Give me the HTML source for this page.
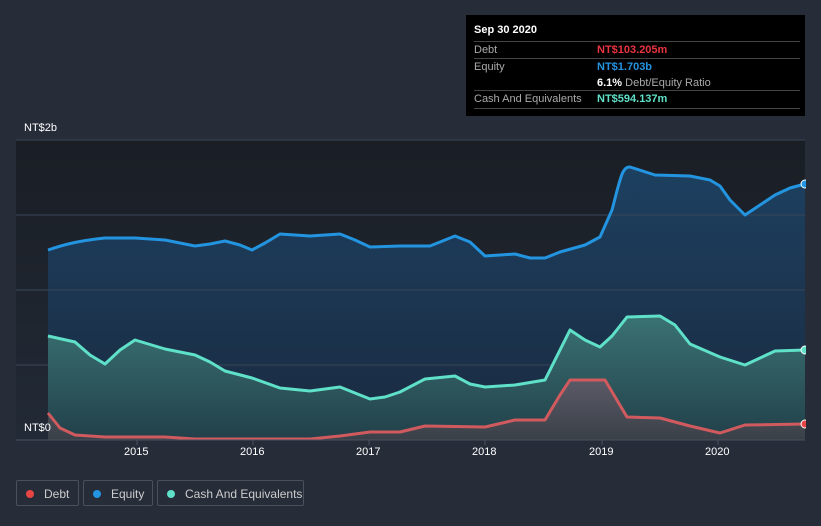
<!DOCTYPE html>
<html><head><meta charset="utf-8"><style>
body{margin:0;width:821px;height:526px;background:#262c38;font-family:"Liberation Sans",sans-serif;overflow:hidden;position:relative}
.t{position:absolute;font-size:11px;color:#fff}
.tip{position:absolute;left:466px;top:15px;width:339px;height:101px;background:#000}
.row{position:absolute;left:8px;width:326px;border-top:1px solid #444;font-size:11px;color:#aaa}
.leg{position:absolute;top:480px;height:26px;border:1px solid #4a505c;border-radius:2px;font-size:12px;color:#ccc;line-height:26px;box-sizing:border-box;padding-left:27px;white-space:nowrap}
.leg i{position:absolute;left:9px;top:9px;width:8px;height:8px;border-radius:50%}
</style></head><body>
<svg width="821" height="526" style="position:absolute;left:0;top:0">
<defs>
<linearGradient id="bg" x1="0" y1="0" x2="0" y2="1"><stop offset="0" stop-color="#1a1e25"/><stop offset="1" stop-color="#222a36"/></linearGradient>
<linearGradient id="eq" x1="0" y1="0" x2="0" y2="1"><stop offset="0" stop-color="#1d4060"/><stop offset="1" stop-color="#1a2a40"/></linearGradient>
<linearGradient id="ca" x1="0" y1="0" x2="0" y2="1"><stop offset="0" stop-color="#3a7272"/><stop offset="1" stop-color="#22404a"/></linearGradient>
<linearGradient id="de" x1="0" y1="0" x2="0" y2="1"><stop offset="0" stop-color="#5a5a66"/><stop offset="1" stop-color="#3a4048"/></linearGradient>
</defs>
<rect x="16" y="140" width="789" height="300" fill="url(#bg)"/>
<path d="M48,250 C60,246 75,241 105,238 L135,238 165,240 195,246 210,244 225,241 240,245 252,250 265,243 280,234 310,236 340,234 355,240 370,247 400,246 430,246 455,236 470,242 485,256 500,255 515,254 530,258 545,258 560,252 585,245 600,237 612,210 C620,180 622,166 630,167 L655,175 690,176 710,180 720,186 730,200 745,215 760,205 775,195 790,188 805,184 L805,440 48,440Z" fill="url(#eq)"/>
<g stroke="#3a4656" stroke-width="1"><line x1="16" y1="140" x2="805" y2="140"/><line x1="16" y1="215" x2="805" y2="215"/><line x1="16" y1="290" x2="805" y2="290"/><line x1="16" y1="365" x2="805" y2="365"/></g>
<path d="M48,336 L75,342 90,355 105,364 120,350 135,340 165,349 195,355 210,362 225,371 252,378 280,388 310,391 340,387 355,393 370,399 385,397 400,392 425,379 455,376 470,384 485,387 515,385 545,380 570,330 585,340 600,347 612,336 627,317 660,316 675,325 690,344 720,357 745,365 760,358 775,351 805,350 L805,440 48,440Z" fill="url(#ca)"/>
<path d="M48,413 L60,428 75,435 105,437 165,437 195,439 310,439 340,436 370,432 400,432 425,426 485,427 515,420 545,420 560,395 570,380 605,380 627,417 660,418 690,426 720,433 745,425 805,424 L805,440 48,440Z" fill="url(#de)"/>
<g fill="none" stroke-width="3" stroke-linejoin="round">
<path d="M48,250 C60,246 75,241 105,238 L135,238 165,240 195,246 210,244 225,241 240,245 252,250 265,243 280,234 310,236 340,234 355,240 370,247 400,246 430,246 455,236 470,242 485,256 500,255 515,254 530,258 545,258 560,252 585,245 600,237 612,210 C620,180 622,166 630,167 L655,175 690,176 710,180 720,186 730,200 745,215 760,205 775,195 790,188 805,184" stroke="#2394df"/>
<path d="M48,336 L75,342 90,355 105,364 120,350 135,340 165,349 195,355 210,362 225,371 252,378 280,388 310,391 340,387 355,393 370,399 385,397 400,392 425,379 455,376 470,384 485,387 515,385 545,380 570,330 585,340 600,347 612,336 627,317 660,316 675,325 690,344 720,357 745,365 760,358 775,351 805,350" stroke="#5fe0c8"/>
<path d="M48,413 L60,428 75,435 105,437 165,437 195,439 310,439 340,436 370,432 400,432 425,426 485,427 515,420 545,420 560,395 570,380 605,380 627,417 660,418 690,426 720,433 745,425 805,424" stroke="#d05a5e"/>
</g>
<line x1="16" y1="440" x2="805" y2="440" stroke="#4a5260"/>
<g stroke="#4a5260"><line x1="137" y1="440" x2="137" y2="445"/><line x1="253" y1="440" x2="253" y2="445"/><line x1="369" y1="440" x2="369" y2="445"/><line x1="485" y1="440" x2="485" y2="445"/><line x1="602" y1="440" x2="602" y2="445"/><line x1="718" y1="440" x2="718" y2="445"/></g>
<circle cx="805" cy="184" r="4" fill="#2394df" stroke="#fff"/>
<circle cx="805" cy="350" r="4" fill="#5fe0c8" stroke="#fff"/>
<circle cx="805" cy="424" r="4" fill="#e84545" stroke="#fff"/>
<rect x="806" y="140" width="15" height="310" fill="#262c38"/>
</svg>
<div class="t" style="left:24px;top:122px">NT$2b</div>
<div class="t" style="left:24px;top:422px">NT$0</div>
<div class="t" style="left:124px;top:446px">2015</div>
<div class="t" style="left:240px;top:446px">2016</div>
<div class="t" style="left:356px;top:446px">2017</div>
<div class="t" style="left:472px;top:446px">2018</div>
<div class="t" style="left:589px;top:446px">2019</div>
<div class="t" style="left:705px;top:446px">2020</div>
<div class="tip">
<div style="position:absolute;left:8px;top:9px;font-size:11px;font-weight:bold;color:#fff">Sep 30 2020</div>
<div class="row" style="top:26px;height:16px;line-height:16px">Debt<span style="position:absolute;left:123px;color:#e8343f;font-weight:bold">NT$103.205m</span></div>
<div class="row" style="top:43px;height:32px;line-height:16px">Equity<span style="position:absolute;left:123px;color:#2394df;font-weight:bold">NT$1.703b</span><br><span style="position:absolute;left:123px;top:16px;color:#aaa"><b style="color:#fff">6.1%</b> Debt/Equity Ratio</span></div>
<div class="row" style="top:75px;height:17px;line-height:16px;border-bottom:1px solid #444">Cash And Equivalents<span style="position:absolute;left:123px;color:#5fe0c8;font-weight:bold">NT$594.137m</span></div>
</div>
<div class="leg" style="left:16px;width:63px"><i style="background:#e84545"></i>Debt</div>
<div class="leg" style="left:83px;width:70px"><i style="background:#2394df"></i>Equity</div>
<div class="leg" style="left:157px;width:147px"><i style="background:#5fe0c8"></i>Cash And Equivalents</div>
</body></html>
